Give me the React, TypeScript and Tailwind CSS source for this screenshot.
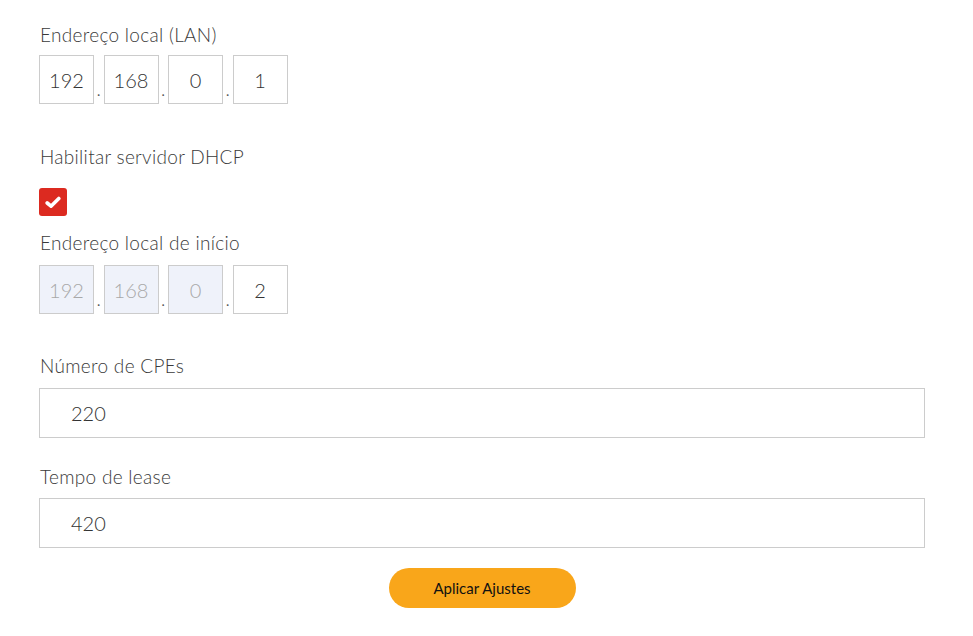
import React, { useState } from "react";

const font = { fontFamily: "Lato, 'Open Sans', sans-serif" };

function Octets({ values, disabled = [] }: { values: string[]; disabled?: boolean[] }) {
  return (
    <div className="flex items-end">
      {values.map((v, i) => (
        <React.Fragment key={i}>
          {i > 0 && <span className="w-[9.5px] text-center text-[14px] leading-[14px] text-[#555] mb-[6px]">.</span>}
          <input
            value={v}
            readOnly
            disabled={disabled[i]}
            className={
              "w-[55px] h-[49px] border border-[#cccccc] text-center text-[20px] font-light outline-none " +
              (disabled[i] ? "bg-[#eff2fa] text-[#a8a8a8]" : "bg-white text-[#333]")
            }
          />
        </React.Fragment>
      ))}
    </div>
  );
}

export default function App() {
  const [dhcp, setDhcp] = useState(true);

  return (
    <div className="min-h-screen bg-white pl-[39px] pr-[48px] pt-[23px]" style={font}>
      <div className="text-[19px] tracking-[0.3px] leading-[24px] font-light text-[#3a3a3a] pl-px">Endereço local (LAN)</div>
      <div className="mt-[8px]">
        <Octets values={["192", "168", "0", "1"]} />
      </div>

      <div className="mt-[41px] text-[19px] tracking-[0.3px] leading-[24px] font-light text-[#3a3a3a] pl-px">Habilitar servidor DHCP</div>
      <button
        onClick={() => setDhcp(!dhcp)}
        className="mt-[19px] w-[28px] h-[28px] rounded-[3px] bg-[#dc2a20] flex items-center justify-center"
      >
        {dhcp && (
          <svg width="16" height="13" viewBox="0 0 16 13">
            <path d="M2.2 7 L6 10.2 L13.8 2.4" stroke="white" strokeWidth="3.6" fill="none" strokeLinecap="round" strokeLinejoin="round" />
          </svg>
        )}
      </button>

      <div className="mt-[15px] text-[19px] tracking-[0.3px] leading-[24px] font-light text-[#3a3a3a] pl-px">Endereço local de início</div>
      <div className="mt-[10px]">
        <Octets values={["192", "168", "0", "2"]} disabled={[true, true, true, false]} />
      </div>

      <div className="mt-[40px] text-[19px] tracking-[0.3px] leading-[24px] font-light text-[#3a3a3a] pl-px">Número de CPEs</div>
      <input
        defaultValue="220"
        className="mt-[10px] block w-[886px] h-[50px] border border-[#cccccc] px-[31px] text-[20px] font-light text-[#333] outline-none"
      />

      <div className="mt-[27px] text-[19px] tracking-[0.3px] leading-[24px] font-light text-[#3a3a3a] pl-px">Tempo de lease</div>
      <input
        defaultValue="420"
        className="mt-[9px] block w-[886px] h-[50px] border border-[#cccccc] px-[31px] text-[20px] font-light text-[#333] outline-none"
      />

      <div className="w-[886px] flex justify-center mt-[20px]">
        <button className="w-[187px] h-[40px] rounded-full bg-[#f9a61a] text-[15px] text-[#111]">Aplicar Ajustes</button>
      </div>
    </div>
  );
}
